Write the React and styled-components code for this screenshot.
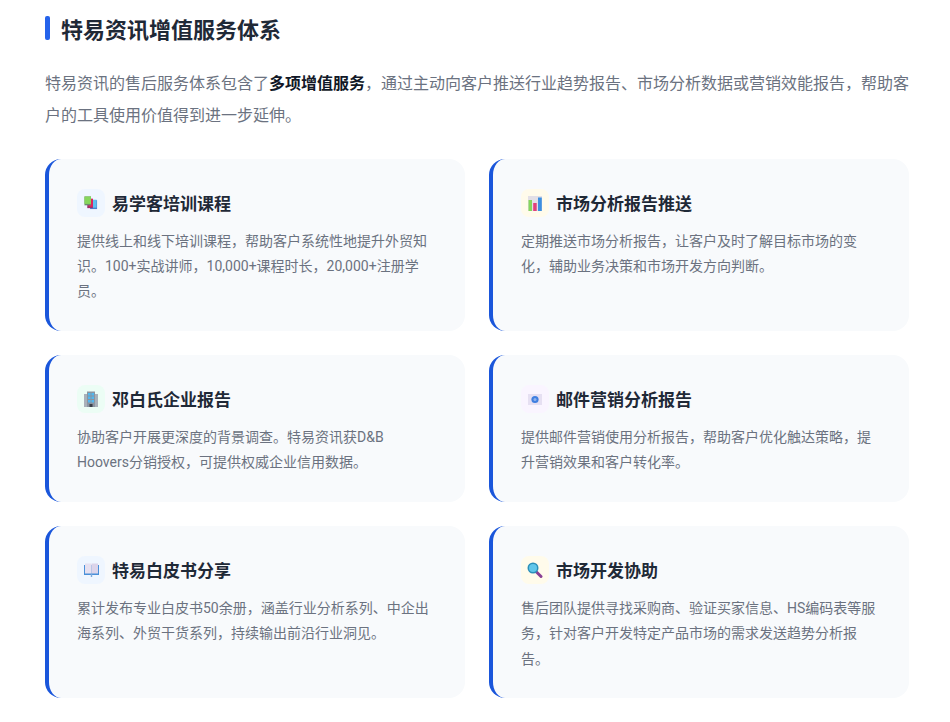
import React from "react";
import styled, { createGlobalStyle } from "styled-components";

const GlobalStyle = createGlobalStyle`
  * { box-sizing: border-box; }
  body {
    margin: 0;
    background: #ffffff;
    font-family: "Roboto", "Noto Sans CJK SC", sans-serif;
  }
`;

const Page = styled.div`
  width: 868px;
  margin-left: 45px;
  padding-top: 16px;
`;

const Heading = styled.h2`
  display: flex;
  align-items: center;
  gap: 11px;
  height: 24px;
  margin: 0 0 28px;
  font-size: 22px;
  font-weight: 700;
  color: #1f2937;
  &::before {
    content: "";
    width: 5px;
    height: 24px;
    border-radius: 2px;
    background: #2563eb;
  }
`;

const Intro = styled.p`
  margin: 0 0 27px;
  font-size: 16px;
  line-height: 32px;
  color: #6b7280;
  strong {
    font-weight: 700;
    color: #111827;
  }
`;

const Grid = styled.div`
  display: grid;
  grid-template-columns: 420px 420px;
  gap: 24.6px 24px;
`;

const Card = styled.div`
  padding: 30px 28px 26px;
  background: #f8fafc;
  border-left: 4px solid #1a56db;
  border-radius: 16px;
`;

const CardHead = styled.div`
  display: flex;
  align-items: center;
  gap: 7px;
  height: 28px;
  margin-bottom: 12px;
`;

const IconBox = styled.span`
  display: flex;
  align-items: center;
  justify-content: center;
  width: 28px;
  height: 28px;
  border-radius: 8px;
  background: ${({ $bg }) => $bg};
`;

const CardTitle = styled.h3`
  margin: 0 0 2px;
  font-size: 17px;
  font-weight: 700;
  color: #1f2937;
`;

const CardText = styled.p`
  margin: 0;
  font-size: 14px;
  line-height: 25.2px;
  color: #6b7280;
`;

const BooksIcon = () => (
  <svg width="14" height="14" viewBox="0 0 15 15">
    <rect x="6.5" y="4.5" width="7.5" height="9.5" fill="#4a7fd0" />
    <rect x="8.5" y="4" width="5" height="8.5" fill="#5cc0f0" />
    <rect x="3.5" y="3" width="6" height="10" fill="#9c2f6a" />
    <rect x="5" y="3" width="4.5" height="8.5" fill="#e0245e" />
    <rect x="0.5" y="0.5" width="7" height="9.5" fill="#6d8a70" />
    <rect x="0.5" y="0.5" width="7" height="8" fill="#86d65c" />
  </svg>
);

const ChartIcon = () => (
  <svg width="14" height="15" viewBox="0 0 14 15">
    <rect x="0" y="0" width="14" height="15" fill="#e2dfe6" />
    <rect x="0.5" y="4" width="3.5" height="11" fill="#86d65c" />
    <rect x="5.2" y="7" width="3.5" height="8" fill="#e0407a" />
    <rect x="10" y="1.5" width="3.8" height="13.5" fill="#3d8fe0" />
  </svg>
);

const BuildingIcon = () => (
  <svg width="14" height="16" viewBox="0 0 14 16">
    <rect x="0" y="3" width="14" height="13" fill="#a9b1ba" />
    <rect x="3" y="0.5" width="8" height="15.5" fill="#8a95a1" />
    <rect x="4" y="2" width="2.5" height="2.5" fill="#50b8f0" />
    <rect x="7.5" y="2" width="2.5" height="2.5" fill="#50b8f0" />
    <rect x="4" y="5.5" width="2.5" height="2.5" fill="#50b8f0" />
    <rect x="7.5" y="5.5" width="2.5" height="2.5" fill="#50b8f0" />
    <rect x="4" y="9" width="2.5" height="2.5" fill="#50b8f0" />
    <rect x="7.5" y="9" width="2.5" height="2.5" fill="#50b8f0" />
    <rect x="5.5" y="13" width="3" height="3" fill="#3a3f4a" />
  </svg>
);

const MailIcon = () => (
  <svg width="14" height="11" viewBox="0 0 14 11">
    <rect x="0" y="0" width="14" height="11" fill="#e6e0f2" />
    <circle cx="7" cy="5.5" r="3.6" fill="#3f7fe0" />
    <circle cx="7" cy="5.5" r="1.5" fill="#8fb2ec" />
  </svg>
);

const BookIcon = () => (
  <svg width="15" height="14" viewBox="0 0 15 14">
    <rect x="0" y="2" width="15" height="10" fill="#4a90d9" />
    <rect x="6.8" y="11" width="1.4" height="3" fill="#7aa8dc" />
    <path d="M1 0.5H6.8C7.2 0.5 7.5 1 7.5 1.5V10.5H1Z" fill="#e6e0f0" />
    <path d="M14 0.5H8.2C7.8 0.5 7.5 1 7.5 1.5V10.5H14Z" fill="#dcd4ea" />
  </svg>
);

const SearchIcon = () => (
  <svg width="16" height="16" viewBox="0 0 16 16">
    <path d="M9.5 10L14 14.5" stroke="#8a3f94" strokeWidth="3" strokeLinecap="round" />
    <circle cx="6" cy="6" r="5.5" fill="#2b8fb8" />
    <circle cx="6" cy="6" r="4" fill="#60c6ea" />
  </svg>
);

const services = [
  {
    title: "易学客培训课程",
    text: "提供线上和线下培训课程，帮助客户系统性地提升外贸知识。100+实战讲师，10,000+课程时长，20,000+注册学员。",
    bg: "#eff6ff",
    icon: <BooksIcon />,
  },
  {
    title: "市场分析报告推送",
    text: "定期推送市场分析报告，让客户及时了解目标市场的变化，辅助业务决策和市场开发方向判断。",
    bg: "#fffbeb",
    icon: <ChartIcon />,
  },
  {
    title: "邓白氏企业报告",
    text: "协助客户开展更深度的背景调查。特易资讯获D&B Hoovers分销授权，可提供权威企业信用数据。",
    bg: "#ecfdf5",
    icon: <BuildingIcon />,
  },
  {
    title: "邮件营销分析报告",
    text: "提供邮件营销使用分析报告，帮助客户优化触达策略，提升营销效果和客户转化率。",
    bg: "#faf5ff",
    icon: <MailIcon />,
  },
  {
    title: "特易白皮书分享",
    text: "累计发布专业白皮书50余册，涵盖行业分析系列、中企出海系列、外贸干货系列，持续输出前沿行业洞见。",
    bg: "#eff6ff",
    icon: <BookIcon />,
  },
  {
    title: "市场开发协助",
    text: "售后团队提供寻找采购商、验证买家信息、HS编码表等服务，针对客户开发特定产品市场的需求发送趋势分析报告。",
    bg: "#fffbeb",
    icon: <SearchIcon />,
  },
];

const App = () => {
  return (
    <Page>
      <GlobalStyle />
      <Heading>特易资讯增值服务体系</Heading>
      <Intro>
        特易资讯的售后服务体系包含了<strong>多项增值服务</strong>，通过主动向客户推送行业趋势报告、市场分析数据或营销效能报告，帮助客户的工具使用价值得到进一步延伸。
      </Intro>
      <Grid>
        {services.map((s) => (
          <Card key={s.title}>
            <CardHead>
              <IconBox $bg={s.bg}>{s.icon}</IconBox>
              <CardTitle>{s.title}</CardTitle>
            </CardHead>
            <CardText>{s.text}</CardText>
          </Card>
        ))}
      </Grid>
    </Page>
  );
};

export default App;
